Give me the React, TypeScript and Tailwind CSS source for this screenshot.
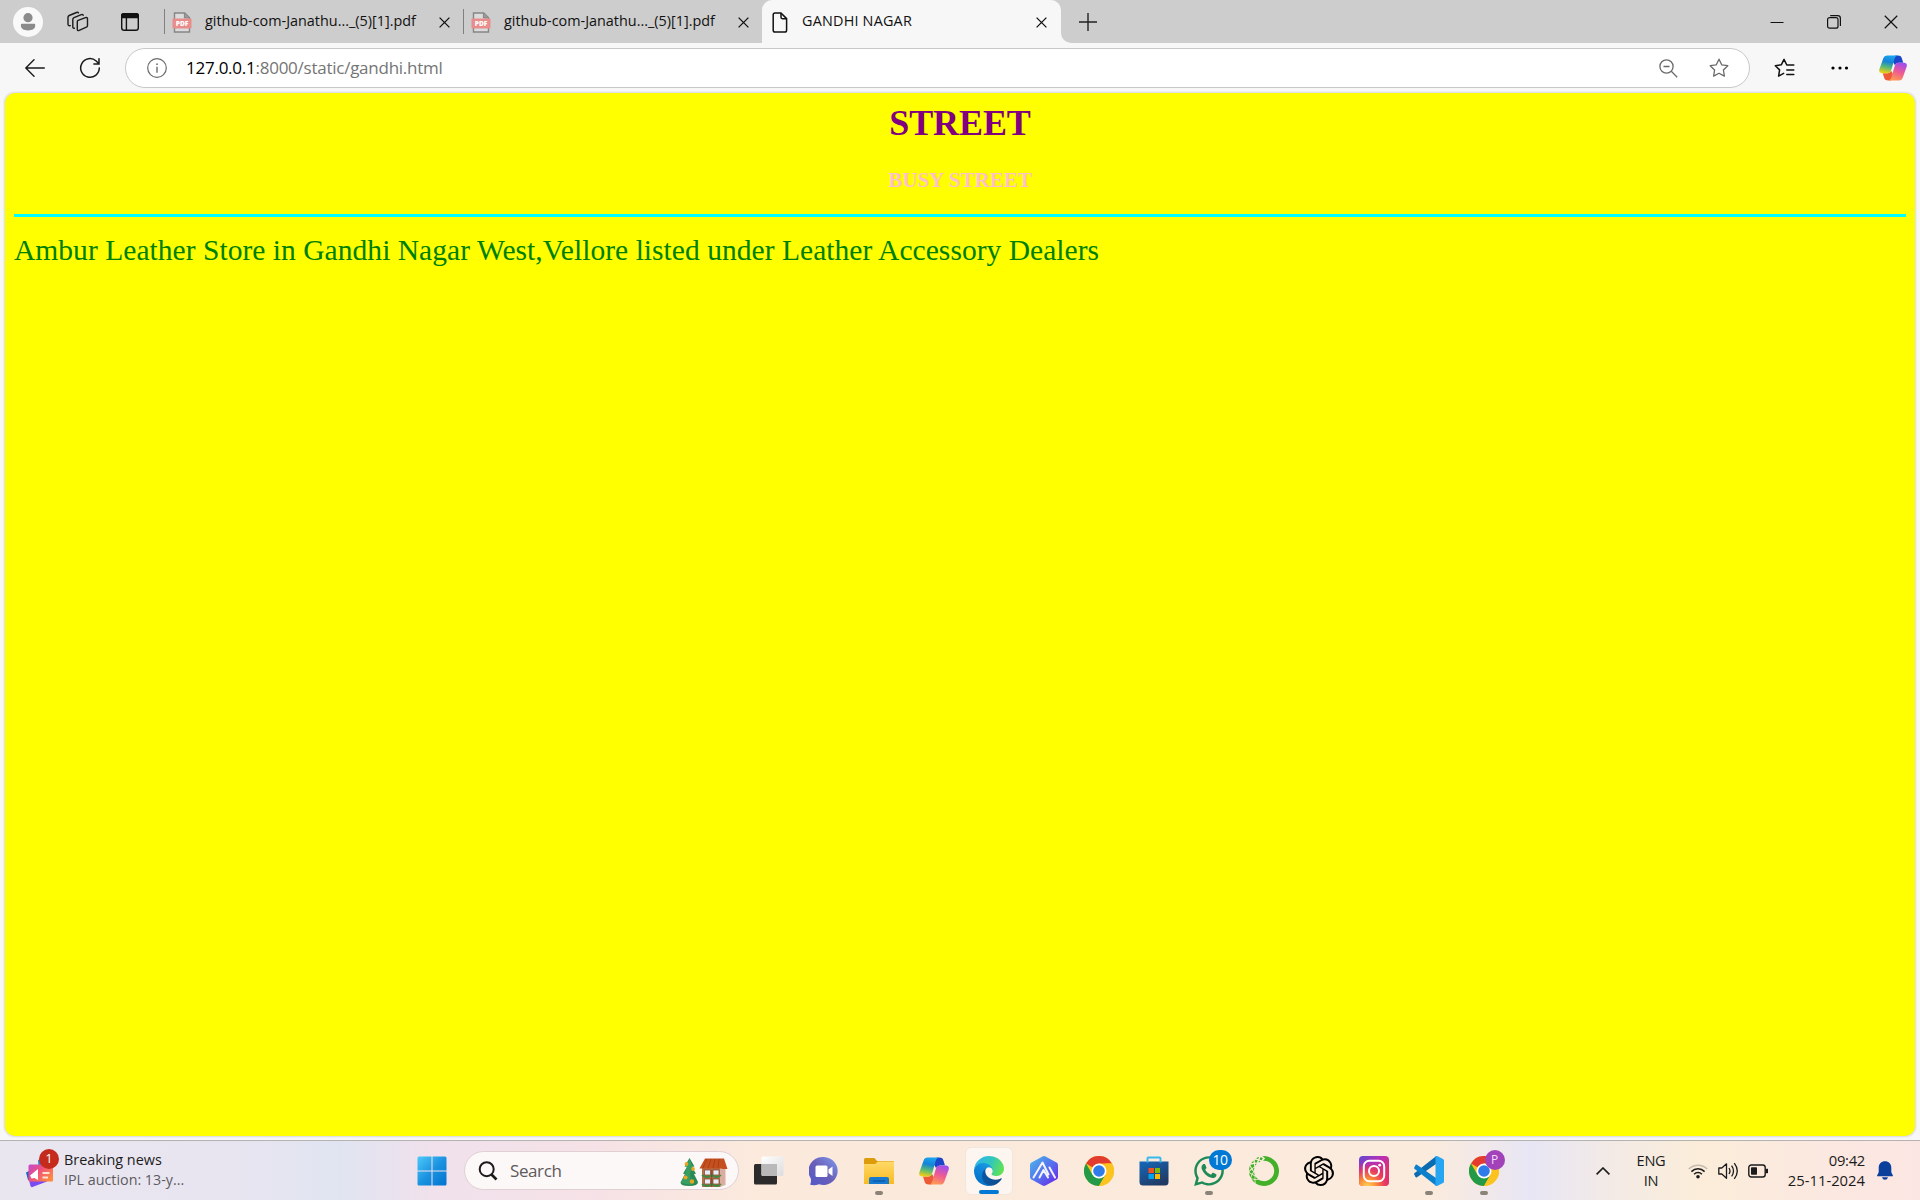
import React from 'react';
import type { ReactNode } from 'react';
import { SiOpenai, SiAnaconda } from 'react-icons/si';
import { FaWhatsapp } from 'react-icons/fa';

function CloseX({ size = 11 }: { size?: number }) {
  return (
    <svg width={size} height={size} viewBox="0 0 11 11" fill="none" stroke="#111" strokeWidth={size > 11 ? 0.9 : 1.3}>
      <path d="M.6.6l9.8 9.8M10.4.6L.6 10.4" />
    </svg>
  );
}

function PdfIcon() {
  return (
    <svg width="20" height="21" viewBox="0 0 20 21" className="shrink-0">
      <path d="M2.5 1h10.2l4.8 4.8V20h-15z" fill="#dcdcdc" stroke="#858585" strokeWidth="1.4" />
      <path d="M12.4 1v5h5" fill="#9a9a9a" stroke="#858585" strokeWidth="1" />
      <rect x="0.5" y="6.5" width="19" height="10" rx="1" fill="#e98c8c" />
      <text x="10" y="14" fontSize="6.6" fontWeight="800" textAnchor="middle" fill="#fff" fontFamily="Open Sans, sans-serif">PDF</text>
    </svg>
  );
}

function PdfTab() {
  return (
    <div className="flex h-[43px] w-[299px] items-center">
      <div className="h-[25px] w-px bg-[#808080]" />
      <div className="mt-px ml-[7px] flex"><PdfIcon /></div>
      <span className="ml-[13px] w-[226px] pb-[2px] text-[14.4px] leading-5 whitespace-nowrap text-[#111]">github-com-Janathu..._(5)[1].pdf</span>
      <span className="mt-px ml-[8px]"><CloseX /></span>
    </div>
  );
}

function TabBar() {
  return (
    <div className="flex h-[43px] bg-[#cdcdcd]">
      <div className="flex w-[164px] items-center">
        <svg width="30" height="30" viewBox="0 0 30 30" className="ml-[13px]">
          <circle cx="15" cy="15" r="15" fill="#f9f9f9" />
          <circle cx="15" cy="10.7" r="4.6" fill="#8b8b8b" />
          <path d="M8.9 16.8h12.3q1 0 1 1v1c0 3-3 4.6-7.1 4.6s-7.2-1.6-7.2-4.6v-1q0-1 1-1z" fill="#8b8b8b" />
        </svg>
        <svg width="22" height="22" viewBox="0 0 22 22" className="ml-6" fill="none" stroke="#1b1b1b" strokeWidth="1.4" strokeLinejoin="round" strokeLinecap="round">
          <path d="M10.5 9.7l8-3.1q2-.6 2 1.2v6.6q0 1.3-1.1 1.8l-7.2 3.2q-1.9.8-1.9-1.2v-6.9q0-1.2.2-1.6z" />
          <path d="M7.4 17.2q-1.6.3-1.6-1.5V8.5q0-1.2 1.2-1.8l7.3-3q1.400-.5 1.9.6" />
          <path d="M3.3 14.6q-2.3.5-2.3-1.5V6.2q0-1.2 1.2-1.7l7.3-3q1.5-.5 1.9.4" />
        </svg>
        <svg width="20" height="20" viewBox="0 0 20 20" className="ml-[31px]" fill="none" stroke="#111" strokeWidth="1.4">
          <rect x="1.7" y="1.7" width="16.6" height="16.6" rx="2.6" />
          <path d="M1.7 5.6V3.5q0-1.8 1.8-1.8h13q1.8 0 1.8 1.8v2.1z" fill="#111" />
          <path d="M6.4 5v13" />
        </svg>
      </div>
      <PdfTab />
      <PdfTab />
      <div className="flex h-full bg-[#f7f7f7]">
        <div className="-ml-2 h-full w-2 rounded-br-[8px] bg-[#cdcdcd]" />
        <div className="flex bg-[#cdcdcd]">
          <div className="flex h-[43px] w-[299px] items-center rounded-t-[10px] bg-[#f7f7f7]">
            <svg width="16" height="21" viewBox="0 0 16 21" className="mt-px ml-[10px]" fill="none" stroke="#111" strokeWidth="1.5" strokeLinejoin="round">
              <path d="M3 1h6l5.6 5.6v11.6q0 1.8-1.8 1.8H3q-1.8 0-1.8-1.8V2.800Q1.2 1 3 1z" />
              <path d="M9 1v4.3q0 1.4 1.4 1.4h4.2" />
            </svg>
            <span className="ml-[14px] w-[234px] pb-[2px] text-[14.4px] leading-5 tracking-[0.2px] text-[#111]">GANDHI NAGAR</span>
            <span className="mt-px"><CloseX /></span>
          </div>
        </div>
      </div>
      <div className="flex-1 bg-[#f7f7f7]">
        <div className="flex h-full items-center rounded-bl-[10px] bg-[#cdcdcd]">
          <svg width="18" height="18" viewBox="0 0 18 18" className="ml-[18px]" fill="none" stroke="#222" strokeWidth="1.4"><path d="M9 0v18M0 9h18" /></svg>
          <div className="ml-auto flex items-center pr-[22px]">
            <svg width="14" height="14" viewBox="0 0 14 14" className="mr-[43px]"><path d="M.5 7.5h13" stroke="#111" strokeWidth="1" /></svg>
            <svg width="14" height="14" viewBox="0 0 14 14" className="mr-[43px]" fill="none" stroke="#111" strokeWidth="1.2">
              <rect x=".6" y="2.6" width="10.4" height="10.6" rx="2" />
              <path d="M3.2.7h7.5q2.7 0 2.7 2.7v7.5" />
            </svg>
            <CloseX size={14} />
          </div>
        </div>
      </div>
    </div>
  );
}

function Copilot({ size, id }: { size: number; id: string }) {
  return (
    <svg width={size} height={size} viewBox="0 0 30 30">
      <defs>
        <linearGradient id={id + 'a'} x1="0.5" y1="0" x2="0.3" y2="1">
          <stop offset="0" stopColor="#18a4ee" /><stop offset=".35" stopColor="#1583d8" /><stop offset=".65" stopColor="#55b878" /><stop offset="1" stopColor="#f5cf12" />
        </linearGradient>
        <linearGradient id={id + 'b'} x1="0.7" y1="0" x2="0.35" y2="1">
          <stop offset="0" stopColor="#a04df0" /><stop offset=".5" stopColor="#ee5a94" /><stop offset="1" stopColor="#ff9a52" />
        </linearGradient>
      </defs>
      <g transform="translate(0 1.5)">
        <path d="M15 7l2-6.5Q17.5 0 19 0h1c3 0 4 1 4.6 3.5L26 8h-5q-3 0-4 2.5z" fill="#1b46c9" />
        <path d="M15 20l-2 6.5q-.5.5-2 .5h-1c-3 0-4-1-4.6-3.5L4 19h5q3 0 4-2.5z" fill="#ee5a35" />
        <path d="M4.700 2.8Q5.600 0 8.500 0H20q-2.500.5-3.300 3L14 13l-1.300 4q-.7 2-3 2H3.200Q-.5 19 .3 15z" fill={`url(#${id}a)`} />
        <path d="M25.300 24.2Q24.400 27 21.500 27H10q2.500-.5 3.300-3L16 14l1.300-4q.7-2 3-2h6.500q3.700 0 2.900 4z" fill={`url(#${id}b)`} />
      </g>
    </svg>
  );
}

const STAR = 'M10 1.200l2.700 5.600 6.100.9-4.400 4.300 1 6.100L10 15.200l-5.400 2.900 1-6.100L1.200 7.700l6.100-.9z';

function Toolbar() {
  return (
    <div className="flex h-[50px] items-center bg-[#f7f7f7]">
      <div className="flex w-[125px] items-center">
        <svg width="20" height="18" viewBox="0 0 20 18" className="ml-[25px]" fill="none" stroke="#1b1b1b" strokeWidth="1.4" strokeLinejoin="round" strokeLinecap="round"><path d="M19.3 9H1M9 .8L.8 9 9 17.2" /></svg>
        <svg width="22" height="22" viewBox="0 0 22 22" className="ml-[34px]" fill="none" stroke="#1b1b1b" strokeWidth="1.5" strokeLinecap="round">
          <path d="M20.300 11a9.300 9.300 0 1 1-3.100-7l2.700 2.700M20 1.800v5.100h-5.100" />
        </svg>
      </div>
      <div className="flex h-[40px] w-[1625px] items-center rounded-full border border-[#c8c8c8] bg-white">
        <svg width="20" height="20" viewBox="0 0 20 20" className="ml-[21px]" fill="none" stroke="#6a6a6a" strokeWidth="1.2">
          <circle cx="10" cy="10" r="9.3" /><path d="M10 8.7v6" strokeWidth="1.4" /><circle cx="10" cy="6.2" r=".9" fill="#6a6a6a" stroke="none" />
        </svg>
        <span className="ml-[19px] text-[17px] leading-6 tracking-[-0.25px] whitespace-nowrap text-[#757575]"><span className="text-black">127.0.0.1</span>:8000/static/gandhi.html</span>
        <svg width="19" height="19" viewBox="0 0 19 19" className="ml-auto" fill="none" stroke="#6a6a6a" strokeWidth="1.3"><circle cx="7.5" cy="7.5" r="6.6" /><path d="M4.5 7.5h6M12.3 12.3l5.900 5.900" /></svg>
        <svg width="20" height="20" viewBox="0 0 20 20" className="mr-[20px] ml-[31px]" fill="none" stroke="#6a6a6a" strokeWidth="1.3" strokeLinejoin="round"><path d={STAR} /></svg>
      </div>
      <div className="flex flex-1 items-center pr-[13px]">
        <svg width="21" height="20" viewBox="0 0 21 20" className="ml-[24px]" fill="none" stroke="#111" strokeWidth="1.5" strokeLinejoin="round" strokeLinecap="round">
          <path d="M12.800 7L10 1.300 7.300 6.800l-6 .9 4.300 4.200-1 6.200 5-2.700M12.800 7h7M12.800 12h7M12.800 16.500h7" />
        </svg>
        <svg width="18" height="4" viewBox="0 0 18 4" className="ml-[36px]"><circle cx="2" cy="2" r="1.6" /><circle cx="9" cy="2" r="1.6" /><circle cx="15.5" cy="2" r="1.6" /></svg>
        <div className="ml-auto flex"><Copilot size={28} id="tb" /></div>
      </div>
    </div>
  );
}

function Slot({ children, active, dot }: { children: ReactNode; active?: boolean; dot?: boolean }) {
  return (
    <div className="flex w-[55px] justify-center">
      <div className={active ? 'relative flex size-[48px] items-center justify-center rounded-[6px] border border-[#f3e6dc] bg-[#fdf5ef]' : 'relative flex size-[48px] items-center justify-center'}>
        {children}
        {active && <div className="absolute bottom-0 h-1 w-5 rounded-full bg-[#0078d4]" />}
        {dot && <div className="absolute bottom-0 h-1 w-2 rounded-full bg-[#8b8378]" />}
      </div>
    </div>
  );
}

function Chrome() {
  return (
    <svg width="30" height="30" viewBox="0 0 30 30">
      <circle cx="15" cy="15" r="15" fill="#fcc31e" />
      <path d="M15 15L2 7.500A15 15 0 0 1 28 7.500H15z" fill="#e33b2e" />
      <path d="M2 7.500A15 15 0 0 0 15 30l6.500-11.300L15 15 8.500 18.700z" fill="#229a48" />
      <path d="M28 7.500A15 15 0 0 1 15 30l6.500-11.300V7.500z" fill="#fcc31e" />
      <circle cx="15" cy="15" r="7.5" fill="#fff" />
      <circle cx="15" cy="15" r="5.8" fill="#2f7bea" />
    </svg>
  );
}

function Edge() {
  return (
    <svg width="30" height="30" viewBox="0 0 256 256">
      <defs>
        <linearGradient id="e1" x1="0" y1="0" x2="1" y2="0"><stop offset="0" stopColor="#0c59a4" /><stop offset="1" stopColor="#114a8b" /></linearGradient>
        <linearGradient id="e2" x1=".8" y1=".1" x2=".4" y2="1"><stop offset="0" stopColor="#1b9de2" /><stop offset=".4" stopColor="#0f86d9" /><stop offset="1" stopColor="#0370c8" /></linearGradient>
        <linearGradient id="e3" x1="0" y1=".3" x2="1" y2=".6"><stop offset="0" stopColor="#2fb4ee" /><stop offset=".5" stopColor="#2fc6c0" /><stop offset="1" stopColor="#65e34f" /></linearGradient>
      </defs>
      <path fill="url(#e1)" d="M231 190.500c-3.400 1.800-6.900 3.400-10.500 4.700a101 101 0 0 1-35.900 6.500c-47.300 0-88.500-32.500-88.500-74.300 0-11.400 6.400-21.900 16.400-27.300-42.800 1.800-53.800 46.400-53.800 72.500 0 73.900 68.100 81.400 82.800 81.400 7.900 0 19.800-2.300 27-4.600l1.300-.4a128.300 128.300 0 0 0 66.600-52.800 4 4 0 0 0-5.400-5.700z" />
      <path fill="url(#e2)" d="M105.700 241.400a79.200 79.200 0 0 1-22.700-21.300 80.700 80.700 0 0 1 29.500-120c3.200-1.500 8.500-4.100 15.600-4a32.400 32.400 0 0 1 25.700 13 31.900 31.900 0 0 1 6.300 18.700c0-.2 24.500-79.600-80-79.600C36.300 48.200.1 89.900.1 126.400a130.200 130.200 0 0 0 12.200 56 128 128 0 0 0 156.400 67.100 75.500 75.500 0 0 1-63-8z" />
      <path fill="url(#e3)" d="M152.300 148.900c-.9 1-3.400 2.500-3.400 5.600 0 2.600 1.700 5.200 4.800 7.300 14.300 10 41.400 8.600 41.500 8.600a59.600 59.600 0 0 0 30.300-8.300 61.400 61.400 0 0 0 30.400-52.900c.3-22.400-8-37.300-11.300-43.900C223.500 23.900 177.700 0 128 0A128 128 0 0 0 0 126.200c.5-36.500 36.800-66 80-66 3.500 0 23.500.3 42 10.100 16.300 8.600 24.900 18.900 30.800 29.200 6.200 10.700 7.300 24.100 7.300 29.500 0 5.300-2.700 13.300-7.800 19.900z" />
    </svg>
  );
}

function News() {
  return (
    <svg width="34" height="38" viewBox="0 0 34 38">
      <defs><linearGradient id="nw" x1="0" y1="0" x2="1" y2=".7"><stop offset="0" stopColor="#c04ad0" /><stop offset=".45" stopColor="#ee4f80" /><stop offset="1" stopColor="#ff8a3d" /></linearGradient></defs>
      <path d="M12 8l10-3 3 12-12 3z" fill="#2386d8" />
      <path d="M1.500 22l16-3 3.500 10.500-14.500 5.500q-1.500.5-2-1z" fill="#7b4bf2" />
      <path d="M0 20.500l3-1.500 1 10-2-1z" fill="#1f62c8" />
      <path d="M4 12.500h22q1 0 1 1v15q0 1-1 1H4q-1.500 0-1.500-1.500V14q0-1.500 1.500-1.500z" fill="url(#nw)" />
      <path d="M4 23.500l8-6.500v11l-3.500-2-3 .5z" fill="#fff" />
      <path d="M16.500 21h7M16.500 25.500h5.500" stroke="#ffe2d8" strokeWidth="1.8" />
    </svg>
  );
}

function Holiday() {
  return (
    <svg width="48" height="30" viewBox="0 0 48 30">
      <path d="M9.500 0l5 8.500-2.500.3 4 7-2 .2 4 8q0 4-8.700 4T.5 24.500L5 16l-2-.2 4-7-2.500-.3z" fill="#2a8a55" />
      <path d="M9.500 0l2.500 8-2 8 1 11-10-2 4-9 2-8z" fill="#3fa66b" opacity=".7" />
      <circle cx="6.5" cy="6" r="1.9" fill="#e8a622" /><circle cx="13" cy="11" r="1.9" fill="#e8a622" /><circle cx="5.5" cy="19.5" r="2.1" fill="#e8a622" /><circle cx="12" cy="23.5" r="2.2" fill="#e8a622" />
      <path d="M22 10h19v19H22z" fill="#b0704a" /><path d="M40 10l5.500-3v20L40 29z" fill="#d9aea0" />
      <path d="M25 .5h19l3.500 10.500H43L41 10.500H19.500z" fill="#c4501f" />
      <path d="M27 1l-4 9M31 1l-3 9M35 1l-2 9M39 1l-1 9" stroke="#9c3813" strokeWidth=".7" />
      <path d="M24.500 12h6v5h-6zM33 12h6v5h-6zM24.500 21h6v5h-6zM33 21h6v5h-6z" fill="#e5eef8" stroke="#8b3d22" strokeWidth=".7" />
      <path d="M22 17q5 4 10 0 5 4 9 0M22 26q5 4 10 0 5 4 9 0" stroke="#3d8a45" strokeWidth="1.7" fill="none" />
      <path d="M31.800 12v17" stroke="#883c23" strokeWidth="1" />
    </svg>
  );
}

function Taskbar() {
  return (
    <div className="flex h-[60px] items-center border-t border-[#b5b2b2] bg-[linear-gradient(90deg,#eae6f0_0px,#e9e5f0_220px,#e0e4f1_340px,#f0e1ec_430px,#f6e2e6_600px,#fbeadc_760px,#fbebdc_1430px,#e8e6f5_1530px,#f3eae6_1610px,#fbedd9_1700px,#fbe9df_1790px,#fce6e3_1920px)]">
      <div className="flex w-[417px] items-center">
        <div className="relative ml-[26px] h-[38px]">
          <News />
          <div className="absolute -top-[3px] left-[13px] flex size-[20px] items-center justify-center rounded-full bg-[#c42b1c] text-[13px] leading-none text-white">1</div>
        </div>
        <div className="ml-[4px] pb-[2px] leading-[20px] whitespace-nowrap">
          <div className="text-[14.4px] text-[#1c1c1c]">Breaking news</div>
          <div className="text-[14.3px] text-[#5d5b60]">IPL auction: 13-y...</div>
        </div>
      </div>
      <svg width="30" height="30" viewBox="0 0 30 30">
        <defs><linearGradient id="win" gradientUnits="userSpaceOnUse" x1="0" y1="0" x2="30" y2="30"><stop offset="0" stopColor="#4fcbfb" /><stop offset=".5" stopColor="#1c93e0" /><stop offset="1" stopColor="#0072cf" /></linearGradient></defs>
        <path d="M2 .5h12.500v14H.5V2q0-1.500 1.500-1.500zM15.500.5H28q1.500 0 1.500 1.500v12.500h-14zM.5 15.500h14v14H2q-1.500 0-1.500-1.500zM15.500 15.500h14V28q0 1.500-1.500 1.500H15.500z" fill="url(#win)" />
      </svg>
      <div className="ml-[17px] flex h-[39px] w-[275px] items-center rounded-full border border-[#e0d0d4] bg-[#fcf8f8]">
        <svg width="20" height="20" viewBox="0 0 20 20" className="ml-[13px]" fill="none" stroke="#1b1b1b" strokeWidth="2"><circle cx="8.7" cy="8.2" r="7" /><path d="M13.500 13.500l5 5" strokeWidth="2.6" /></svg>
        <span className="ml-[12px] text-[17px] leading-6 tracking-[-0.4px] text-[#5e5a5b]">Search</span>
        <div className="mt-[4px] mr-[10px] ml-auto flex"><Holiday /></div>
      </div>
      <div className="ml-[2px] flex">
        <Slot>
          <svg width="30" height="29" viewBox="0 0 30 29">
            <defs><linearGradient id="tv" x1="0" y1="0" x2="1" y2="1"><stop offset="0" stopColor="#fff" /><stop offset="1" stopColor="#dcdcde" /></linearGradient></defs>
            <rect x="0" y="8" width="23" height="20.5" rx="1.5" fill="#2b2b2b" /><rect x="7.5" y=".5" width="22" height="19.5" rx="1.5" fill="url(#tv)" /><path d="M7.500 8H23v12H9q-1.500 0-1.500-1.500z" fill="#b9b9b9" />
          </svg>
        </Slot>
        <Slot>
          <svg width="30" height="30" viewBox="0 0 30 30">
            <defs><linearGradient id="mt" x1="0" y1="1" x2="1" y2="0"><stop offset="0" stopColor="#5059c9" /><stop offset=".5" stopColor="#6a60b8" /><stop offset="1" stopColor="#7f9af0" /></linearGradient></defs>
            <path d="M15 1a14 14 0 1 1-5 27.200Q5 30 1 28.500q1.500-2.500.8-6A14 14 0 0 1 15 1z" fill="url(#mt)" />
            <rect x="6.5" y="9.5" width="12" height="11.5" rx="1.5" fill="#fff" /><path d="M19.500 13.500l4-3v9.500l-4-3z" fill="#fff" />
          </svg>
        </Slot>
        <Slot dot>
          <svg width="30" height="28" viewBox="0 0 30 28">
            <defs><linearGradient id="fo" x1="0" y1="0" x2="0" y2="1"><stop offset="0" stopColor="#ffd968" /><stop offset="1" stopColor="#f8bb22" /></linearGradient></defs>
            <path d="M1.500 1h9l2.500 3h16q1 0 1 1v5H0V2.500Q0 1 1.500 1z" fill="#dc9c0c" />
            <path d="M0 7h11l3-2.500h16V27H0z" fill="url(#fo)" />
            <path d="M5 27v-5q0-2 2-2h16q2 0 2 2v5z" fill="#1779cf" /><path d="M9 24h12" stroke="#0b559c" strokeWidth="1.2" />
          </svg>
        </Slot>
        <Slot><Copilot size={30} id="cp" /></Slot>
        <Slot active><Edge /></Slot>
        <Slot>
          <svg width="28" height="30" viewBox="0 0 28 30">
            <defs><linearGradient id="ai" x1="0" y1="0" x2="1" y2="1"><stop offset="0" stopColor="#4bb8ea" /><stop offset=".5" stopColor="#5573ee" /><stop offset="1" stopColor="#6a1eea" /></linearGradient></defs>
            <path d="M12.500.4q1.500-.8 3 0L26.500 6.500Q28 7.400 28 9v12q0 1.600-1.500 2.500l-11 6.100q-1.500.8-3 0l-11-6.100Q0 22.600 0 21V9q0-1.600 1.500-2.500z" fill="url(#ai)" />
            <path d="M3.500 21.500L12.500 6.500l6 12M9.500 21.500l4-7.500 4.500 7.500M19.500 11.500l5.500 10" fill="none" stroke="#f4f4ff" strokeWidth="2" strokeLinejoin="round" strokeLinecap="round" />
          </svg>
        </Slot>
        <Slot><Chrome /></Slot>
        <Slot>
          <svg width="30" height="30" viewBox="0 0 30 30">
            <defs><linearGradient id="st" x1="0" y1="0" x2=".6" y2="1"><stop offset="0" stopColor="#1569bd" /><stop offset="1" stopColor="#213a63" /></linearGradient></defs>
            <path d="M.5 5.500h29V26q0 3.500-3.500 3.500H4Q.5 29.500.5 26z" fill="url(#st)" />
            <path d="M8.500 6.500V2.500q0-1 1-1h11q1 0 1 1v4" fill="none" stroke="#38b8ef" strokeWidth="2" />
            <path d="M9.500 12H15v5H9.500z" fill="#f25022" /><path d="M16 12h5v5h-5z" fill="#7fba00" /><path d="M9.500 18H15v5H9.500z" fill="#00a4ef" /><path d="M16 18h5v5h-5z" fill="#ffb900" />
          </svg>
        </Slot>
        <Slot dot>
          <FaWhatsapp size={34} color="#1e8a57" />
          <div className="absolute top-[3px] left-[24px] flex h-[20px] w-[23px] items-center justify-center rounded-full bg-[#0078d4] text-[14px] leading-none tracking-[-0.5px] text-white">10</div>
        </Slot>
        <Slot><SiAnaconda size={30} color="#43b02a" /></Slot>
        <Slot><SiOpenai size={30} color="#000" /></Slot>
        <Slot>
          <svg width="30" height="30" viewBox="0 0 30 30">
            <defs>
              <linearGradient id="ig" x1=".1" y1="0" x2=".9" y2="1"><stop offset="0" stopColor="#6a45d0" /><stop offset=".35" stopColor="#b92fb4" /><stop offset=".7" stopColor="#e0306e" /><stop offset="1" stopColor="#d92a7c" /></linearGradient>
              <radialGradient id="ih" cx=".28" cy="1.05" r=".85"><stop offset="0" stopColor="#ffdc5c" /><stop offset=".35" stopColor="#fb8f37" /><stop offset=".7" stopColor="#ee3f55" stopOpacity=".8" /><stop offset="1" stopColor="#e0306e" stopOpacity="0" /></radialGradient>
            </defs>
            <rect width="30" height="30" rx="4" fill="url(#ig)" /><rect width="30" height="30" rx="4" fill="url(#ih)" />
            <rect x="4.8" y="4.8" width="20.4" height="20.4" rx="5.5" fill="none" stroke="#fff" strokeWidth="2" /><circle cx="15" cy="15" r="5" fill="none" stroke="#fff" strokeWidth="2" /><circle cx="20.7" cy="9.2" r="1.4" fill="#fff" />
          </svg>
        </Slot>
        <Slot dot>
          <svg width="30" height="30" viewBox="0 0 30 30">
            <path d="M.4 18.700q-.7-.8 0-1.500L22 .2V8L3 21.200q-.8.5-1.500-.2z" fill="#0a6bb0" />
            <path d="M.4 11.300q-.7.8 0 1.500L22 29.800V22L3 8.800q-.8-.5-1.500.2z" fill="#0d80cc" />
            <path d="M21.500.3q.8-.6 1.600-.2l5.900 2.900q1 .5 1 1.600v20.800q0 1.100-1 1.600l-5.900 2.900q-.8.4-1.600-.2z" fill="#27a5f2" />
          </svg>
        </Slot>
        <Slot dot>
          <Chrome />
          <div className="absolute top-[3px] left-[25px] flex size-[20px] items-center justify-center rounded-full bg-[#a142b8] text-[12px] leading-none text-[#f3d9f8]">P</div>
        </Slot>
      </div>
      <div className="ml-auto flex items-center pr-[27px] text-[#1b1b1b]">
        <svg width="14" height="8" viewBox="0 0 14 8" fill="none" stroke="#1b1b1b" strokeWidth="1.6"><path d="M.6 7.400L7 1l6.400 6.400" /></svg>
        <div className="ml-[26px] w-[30px] pb-[1px] text-center text-[14.6px] leading-[20px] tracking-[-0.3px]">
          <div>ENG</div>
          <div>IN</div>
        </div>
        <svg width="20" height="16" viewBox="0 0 20 16" className="ml-[22px]" fill="none" strokeWidth="1.5">
          <path d="M.8 6a13 13 0 0 1 18.400 0" stroke="#c4bbaf" /><path d="M3.400 8.600a9.300 9.300 0 0 1 13.200 0M6.100 11.200a5.600 5.600 0 0 1 7.800 0" stroke="#1b1b1b" /><circle cx="10" cy="13.8" r="1.8" fill="#1b1b1b" />
        </svg>
        <svg width="21" height="18" viewBox="0 0 21 18" className="ml-[10px]" fill="none" stroke="#1b1b1b" strokeWidth="1.3" strokeLinejoin="round">
          <path d="M.8 6v6h3l4.700 4.200V1.800L3.800 6z" /><path d="M11 6q2 3 0 6M13.600 3.600q3.800 5.400 0 10.800M16.300 1.200q6 7.800 0 15.600" />
        </svg>
        <svg width="21" height="14" viewBox="0 0 21 14" className="ml-[9px]" fill="none" stroke="#1b1b1b" strokeWidth="1.4">
          <rect x=".8" y="1" width="16.4" height="12" rx="2.5" /><rect x="3" y="3.2" width="6" height="7.6" rx=".8" fill="#1b1b1b" stroke="none" /><path d="M18.800 4.800v4.400" strokeWidth="2.4" />
        </svg>
        <div className="ml-[17px] w-[79px] pb-[2px] text-right text-[14.8px] leading-[20px] whitespace-nowrap">
          <div className="tracking-[-0.3px]">09:42</div>
          <div>25-11-2024</div>
        </div>
        <svg width="16" height="19" viewBox="0 0 16 19" className="ml-[12px]"><path d="M8 .2c3.700 0 6.300 2.600 6.300 6.300v4.700l1.600 3.400v.6H.1v-.6l1.600-3.400V6.500C1.700 2.800 4.300.2 8 .2zM5 16.300h6q-.6 2.500-3 2.500t-3-2.500z" fill="#0a3f9b" /></svg>
      </div>
    </div>
  );
}

export default function App() {
  return (
    <div className="flex h-[1200px] w-[1920px] flex-col overflow-hidden bg-[#f7f7f7] font-['Open_Sans',sans-serif]">
      <TabBar />
      <Toolbar />
      <main className="mx-[5px] mb-[4px] flex-1 rounded-[10px] bg-[#ffff00] px-[9px] shadow-[0_0_2px_1px_rgba(0,0,0,0.12)]">
        <h1 className="pt-[9px] text-center font-['Liberation_Serif',serif] text-[36px] leading-[42px] font-bold tracking-[-0.1px] text-[#800080]">STREET</h1>
        <h3 className="mt-[24px] text-center font-['Liberation_Serif',serif] text-[21.06px] leading-[24px] font-bold text-[#ffc0cb]">BUSY STREET</h3>
        <hr className="mt-[22px] h-[3px] border-0 bg-[#00ffff]" />
        <p className="mt-[15px] font-['Liberation_Serif',serif] text-[29.5px] leading-[36px] tracking-[0.04px] whitespace-nowrap text-[#008000]">Ambur Leather Store in Gandhi Nagar West,Vellore listed under Leather Accessory Dealers</p>
      </main>
      <Taskbar />
    </div>
  );
}
